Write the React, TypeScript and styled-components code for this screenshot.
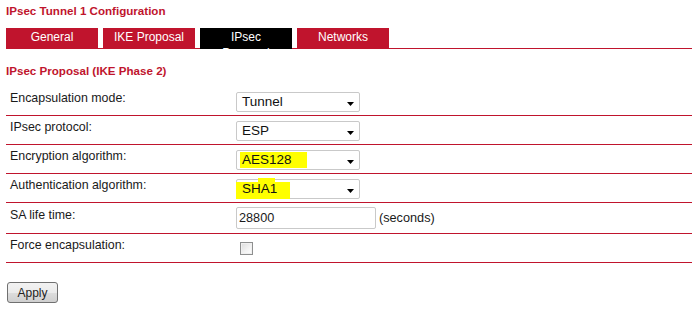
import React from "react";
import styled, { createGlobalStyle } from "styled-components";

const RED = "#c0142d";

const Global = createGlobalStyle`
  html, body { margin: 0; padding: 0; background: #fff; }
  body { font-family: "Liberation Sans", Arial, sans-serif; color: #1a1a1a; }
`;

const Page = styled.div`
  padding: 0 8px 0 6px;
`;

const Title = styled.div`
  margin-top: 4px;
  font-size: 11.6px;
  line-height: 14px;
  font-weight: bold;
  color: ${RED};
`;

const TabBar = styled.div`
  margin-top: 10px;
  display: flex;
  align-items: flex-start;
  gap: 5px;
  border-bottom: 1px solid ${RED};
  height: 20px;
`;

const Tab = styled.div<{ $active?: boolean }>`
  width: 92px;
  height: ${(p) => (p.$active ? "21px" : "20px")};
  background: ${(p) => (p.$active ? "#000" : RED)};
  color: #fff;
  font-size: 12px;
  line-height: 16px;
  padding-top: 1px;
  box-sizing: border-box;
  text-align: center;
  overflow: hidden;
  position: relative;
  z-index: 1;
  word-spacing: ${(p) => (p.$active ? "40px" : "normal")};
`;

const Header = styled.div`
  margin-top: 15px;
  margin-bottom: 9px;
  font-size: 11.6px;
  line-height: 14px;
  font-weight: bold;
  color: ${RED};
`;

const Table = styled.div`
  display: flex;
  flex-direction: column;
`;

const Row = styled.div<{ $h: number }>`
  display: grid;
  grid-template-columns: 230px 1fr;
  align-items: center;
  height: ${(p) => p.$h}px;
  border-bottom: 1px solid ${RED};
`;

const Label = styled.div`
  padding-left: 4px;
  font-size: 12.4px;
  line-height: 15px;
  margin-bottom: 5px;
  color: #1a1a1a;
`;

const Value = styled.div`
  display: flex;
  align-items: center;
  gap: 3px;
`;

const Select = styled.div`
  position: relative;
  width: 124px;
  height: 20px;
  box-sizing: border-box;
  border: 1px solid #c9c9c9;
  border-radius: 2px;
  background: #fff;
  display: flex;
  align-items: center;
  padding-left: 5px;
  font-size: 13.5px;
  color: #111;
  margin-top: 1px;
`;

const SelText = styled.span`
  position: relative;
  z-index: 1;
`;

const Mark = styled.span<{ $x: number; $y: number; $w: number; $h: number }>`
  position: absolute;
  left: ${(p) => p.$x}px;
  top: ${(p) => p.$y}px;
  width: ${(p) => p.$w}px;
  height: ${(p) => p.$h}px;
  background: #ffff00;
`;

const Arrow = styled.svg`
  position: absolute;
  right: 5px;
  top: 9px;
`;

const TextInput = styled.input`
  width: 140px;
  height: 22px;
  box-sizing: border-box;
  border: 1px solid #c9c9c9;
  border-radius: 2px;
  padding: 0 0 0 2px;
  margin: 0;
  font-family: "Liberation Sans", Arial, sans-serif;
  font-size: 12.7px;
  color: #1a1a1a;
  outline: none;
`;

const Unit = styled.span`
  font-size: 12.7px;
  color: #1a1a1a;
`;

const Check = styled.input`
  appearance: none;
  -webkit-appearance: none;
  width: 13px;
  height: 13px;
  margin: 0 0 0 4px;
  box-sizing: border-box;
  border: 1px solid #8e8f8f;
  background: linear-gradient(135deg, #dcdcdc 0%, #f4f4f4 60%, #ffffff 100%);
  box-shadow: inset 0 0 0 1px #f0f0f0;
`;

const Button = styled.button`
  margin: 19px 0 0 1px;
  width: 51px;
  height: 21px;
  box-sizing: border-box;
  border: 1px solid #707070;
  border-radius: 3px;
  background: linear-gradient(to bottom, #f2f2f2 0%, #ebebeb 50%, #dddddd 51%, #cfcfcf 100%);
  font-family: "Liberation Sans", Arial, sans-serif;
  font-size: 12px;
  color: #222;
  padding: 0;
  display: block;
`;

const DropArrow = () => (
  <Arrow width="7" height="4" viewBox="0 0 7 4">
    <polygon points="0,0 7,0 3.5,4" fill="#000" />
  </Arrow>
);

export default function App() {
  return (
    <Page>
      <Global />
      <Title>IPsec Tunnel 1 Configuration</Title>
      <TabBar>
        <Tab>General</Tab>
        <Tab>IKE Proposal</Tab>
        <Tab $active>IPsec Proposal</Tab>
        <Tab>Networks</Tab>
      </TabBar>
      <Header>IPsec Proposal (IKE Phase 2)</Header>
      <Table>
        <Row $h={28}>
          <Label>Encapsulation mode:</Label>
          <Value>
            <Select>
              <SelText>Tunnel</SelText>
              <DropArrow />
            </Select>
          </Value>
        </Row>
        <Row $h={28}>
          <Label>IPsec protocol:</Label>
          <Value>
            <Select>
              <SelText>ESP</SelText>
              <DropArrow />
            </Select>
          </Value>
        </Row>
        <Row $h={28}>
          <Label>Encryption algorithm:</Label>
          <Value>
            <Select>
              <Mark $x={3} $y={1} $w={67} $h={16} />
              <SelText>AES128</SelText>
              <DropArrow />
            </Select>
          </Value>
        </Row>
        <Row $h={28}>
          <Label>Authentication algorithm:</Label>
          <Value>
            <Select>
              <Mark $x={-1} $y={2} $w={54} $h={17} />
              <Mark $x={21} $y={-2} $w={17} $h={5} />
              <SelText>SHA1</SelText>
              <DropArrow />
            </Select>
          </Value>
        </Row>
        <Row $h={30}>
          <Label>SA life time:</Label>
          <Value>
            <TextInput defaultValue="28800" />
            <Unit>(seconds)</Unit>
          </Value>
        </Row>
        <Row $h={28}>
          <Label>Force encapsulation:</Label>
          <Value>
            <Check type="checkbox" />
          </Value>
        </Row>
      </Table>
      <Button>Apply</Button>
    </Page>
  );
}
